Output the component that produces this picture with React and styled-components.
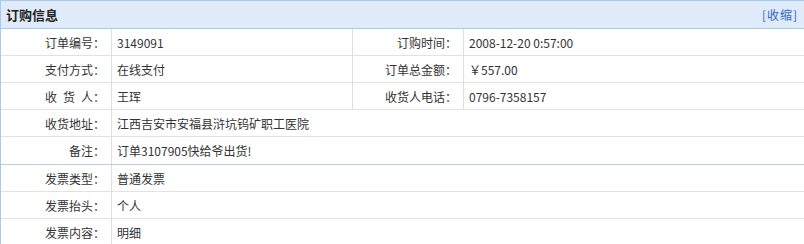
import styled, { createGlobalStyle } from "styled-components";

const GlobalStyle = createGlobalStyle`
  body {
    margin: 0;
    background: #ffffff;
    font-family: "SimSun", "Noto Sans CJK SC", sans-serif;
    font-size: 12px;
    color: #333333;
  }
`;

const Panel = styled.div`
  width: 804px;
  border-left: 1px solid #a8c8ee;
  box-sizing: border-box;
`;

const PanelHeader = styled.div`
  height: 29px;
  display: flex;
  align-items: center;
  justify-content: space-between;
  padding: 0 6px 0 5px;
  background: #dfebf8;
  border-top: 1px solid #a8c8ee;
  border-bottom: 1px solid #a8c8ee;
  box-sizing: border-box;
`;

const PanelTitle = styled.h3`
  margin: 0;
  font-size: 13px;
  font-weight: bold;
  color: #222222;
`;

const ToggleLink = styled.a`
  color: #3366cc;
  font-size: 12px;
  letter-spacing: 1px;
  cursor: pointer;
  text-decoration: none;
`;

const Section = styled.div`
  display: grid;
  grid-template-columns: 111px 241px 111px 1fr;
  border-bottom: ${({ $last }) => ($last ? "none" : "1px solid #b7cde9")};
`;

const Cell = styled.div`
  height: 27px;
  box-sizing: border-box;
  display: flex;
  align-items: center;
  border-right: 1px solid #dedede;
  border-bottom: 1px solid #e2e2e2;
  grid-column: ${({ $span }) => ($span ? `span ${$span}` : "auto")};
`;

const Label = styled(Cell)`
  justify-content: flex-end;
  padding-right: 6px;
  white-space: pre;
`;

const Value = styled(Cell)`
  padding-left: 5px;
  border-right: ${({ $wide }) => ($wide ? "none" : "1px solid #dedede")};
`;

const LastRow = styled.div`
  display: contents;
  & > div {
    border-bottom: none;
  }
`;

const OrderInfo = () => {
  return (
    <Panel>
      <PanelHeader>
        <PanelTitle>订购信息</PanelTitle>
        <ToggleLink>[收缩]</ToggleLink>
      </PanelHeader>
      <Section>
        <Label>订单编号：</Label>
        <Value>3149091</Value>
        <Label>订购时间：</Label>
        <Value $wide>2008-12-20 0:57:00</Value>

        <Label>支付方式：</Label>
        <Value>在线支付</Value>
        <Label>订单总金额：</Label>
        <Value $wide>￥557.00</Value>

        <Label>{"收\u2002货\u2002人："}</Label>
        <Value>王珲</Value>
        <Label>收货人电话：</Label>
        <Value $wide>0796-7358157</Value>

        <Label>收货地址：</Label>
        <Value $wide $span={3}>江西吉安市安福县浒坑钨矿职工医院</Value>

        <LastRow>
          <Label>备注：</Label>
          <Value $wide $span={3}>订单3107905快给爷出货!</Value>
        </LastRow>
      </Section>
      <Section $last>
        <Label>发票类型：</Label>
        <Value $wide $span={3}>普通发票</Value>

        <Label>发票抬头：</Label>
        <Value $wide $span={3}>个人</Value>

        <LastRow>
          <Label>发票内容：</Label>
          <Value $wide $span={3}>明细</Value>
        </LastRow>
      </Section>
    </Panel>
  );
};

export default function App() {
  return (
    <>
      <GlobalStyle />
      <OrderInfo />
    </>
  );
}
